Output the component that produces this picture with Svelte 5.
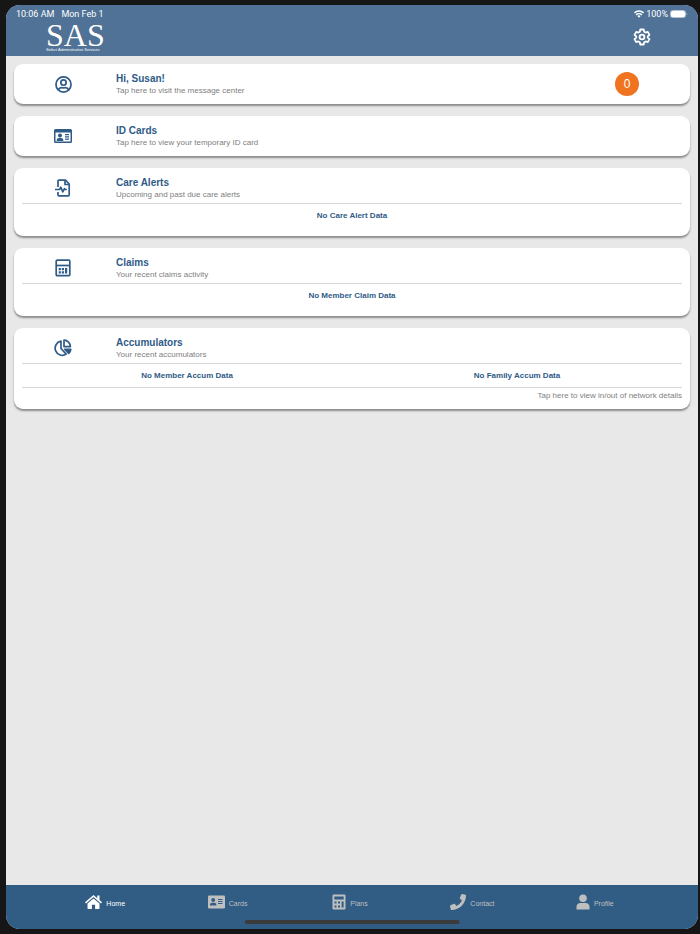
<script lang="ts">
  type Tab = { id: string, label: string };

  const tabs: Tab[] = [
    { id: "home", label: "Home" },
    { id: "cards", label: "Cards" },
    { id: "plans", label: "Plans" },
    { id: "contact", label: "Contact" },
    { id: "profile", label: "Profile" }
  ];

  let activeTab = $state("home");
  let messageCount = $state(0);
</script>

{#snippet cardIcon(name: string)}
  <span class="cardIcon">
    {#if name == "user"}
      <svg width="17" height="17" viewBox="0 0 16 16" fill="none" stroke="currentColor" stroke-width="1.6">
        <circle cx="8" cy="8" r="7.1" />
        <circle cx="8" cy="6.2" r="2.5" />
        <path d="M3 13c.8-1.7 2-2.1 3.2-2.1.7 0 1 .3 1.8.3s1.1-.3 1.8-.3c1.2 0 2.4.4 3.2 2.1" />
      </svg>
    {:else if name == "id"}
      <svg width="18" height="16" viewBox="0 0 18 16">
        <path fill="currentColor" fill-rule="evenodd" d="M1.500 1h15A1.500 1.500 0 0 1 18 2.500v11a1.500 1.500 0 0 1-1.500 1.500h-15A1.500 1.500 0 0 1 0 13.500v-11A1.500 1.500 0 0 1 1.500 1zM1.500 4.600v8.900h15V4.600z" />
        <circle cx="6" cy="7.600" r="2" fill="currentColor" />
        <path fill="currentColor" d="M2.700 13v-.8c0-1.400 1-2.200 2.200-2.200h2.200c1.200 0 2.200.8 2.200 2.200v.8z" />
        <path stroke="currentColor" stroke-width="1.300" d="M11 6.600h4M11 8.900h4M11 11.200h4" />
      </svg>
    {:else if name == "alert"}
      <svg width="18" height="18" viewBox="0 0 18 18" fill="none" stroke="currentColor" stroke-width="1.700" stroke-linejoin="round">
        <path d="M4 8V2.200c0-.6.400-1 1-1h6.500L15.200 5v10.800c0 .6-.4 1-1 1H5c-.6 0-1-.4-1-1V13" />
        <path d="M11 1.500v4h3.800" />
        <path d="M1 10.500h4.500l1.300-2.300 2 4.600 1.700-3.200.6.900h1.700" />
      </svg>
    {:else if name == "claims"}
      <svg width="16" height="18" viewBox="0 0 16 18" fill="none" stroke="currentColor">
        <rect x="1.200" y="1.200" width="13.600" height="15.400" rx="1" stroke-width="1.700" />
        <path stroke-width="1.700" d="M1 6.500h14" />
        <path stroke-width="2.200" d="M3.700 10.100h2.200M6.800 10.100H9M3.700 13.300h2.200M6.800 13.300H9M11.100 9v5.400" />
      </svg>
    {:else}
      <svg width="18" height="18" viewBox="0 0 18 18" fill="none" stroke="currentColor" stroke-width="1.700" stroke-linejoin="round">
        <path d="M7 2.200A7.100 7.100 0 1 0 12.200 15.100L7 9.500z" />
        <path d="M10 1.200A6.600 6.600 0 0 1 16.400 7.600H10z" />
        <path fill="currentColor" d="M10.800 10.400h6c-.2 1.600-.9 2.900-2 4z" />
      </svg>
    {/if}
  </span>
{/snippet}

{#snippet cardHead(icon: string, title: string, text: string)}
  <button class="cardHead">
    {@render cardIcon(icon)}
    <span class="cardText">
      <span class="title">{title}</span>
      <span class="sub">{text}</span>
    </span>
    {#if icon == "user"}
      <span class="count">{messageCount}</span>
    {/if}
  </button>
{/snippet}

<div class="device">
  <div class="screen">
    <header>
      <div class="statusBar">
        <span>10:06 AM</span>
        <span>Mon Feb 1</span>
        <span class="battery">
          <svg width="10" height="8" viewBox="0 0 10 8" fill="none" stroke="#fff" stroke-width="1.500">
            <path d="M.5 2.900a6.500 6.500 0 0 1 9 0M2.200 4.900a4 4 0 0 1 5.600 0" />
            <path fill="#fff" stroke="none" d="M3.400 6a2.300 2.300 0 0 1 3.200 0L5 7.800z" />
          </svg>
          100%
          <svg width="18" height="8" viewBox="0 0 18 8">
            <rect x=".5" y=".5" width="15" height="7" rx="2" fill="none" stroke="#b5c4d4" />
            <rect x="1" y="1" width="14" height="6" rx="1.500" fill="#fff" />
            <path d="M16.500 2.800v2.400c1-.3 1-2.100 0-2.400z" fill="#b5c4d4" />
          </svg>
        </span>
      </div>
      <div class="toolbar">
        <div class="logo">
          <span class="logoName">SAS</span>
          <span class="logoText">Select Administrative Services</span>
        </div>
        <button class="settings" aria-label="Settings">
          <svg width="18" height="18" viewBox="0 0 24 24" fill="none" stroke="#fff" stroke-width="2.400" stroke-linejoin="round">
            <path d="M9.700 2h4.600l.6 3 1.900 1.100 2.900-1 2.300 4-2.300 2v1.800l2.300 2-2.300 4-2.900-1-1.900 1.100-.6 3H9.700l-.6-3-1.900-1.100-2.900 1-2.300-4 2.300-2v-1.800l-2.300-2 2.300-4 2.900 1L9.100 5z" />
            <circle cx="12" cy="12" r="3.200" />
          </svg>
        </button>
      </div>
    </header>

    <main>
      <section class="card">
        {@render cardHead("user", "Hi, Susan!", "Tap here to visit the message center")}
      </section>

      <section class="card">
        {@render cardHead("id", "ID Cards", "Tap here to view your temporary ID card")}
      </section>

      <section class="card">
        {@render cardHead("alert", "Care Alerts", "Upcoming and past due care alerts")}
        <div class="data">
          <p>No Care Alert Data</p>
        </div>
      </section>

      <section class="card">
        {@render cardHead("claims", "Claims", "Your recent claims activity")}
        <div class="data">
          <p>No Member Claim Data</p>
        </div>
      </section>

      <section class="card">
        {@render cardHead("accum", "Accumulators", "Your recent accumulators")}
        <div class="data split">
          <p>No Member Accum Data</p>
          <p>No Family Accum Data</p>
        </div>
        <button class="details">Tap here to view in/out of network details</button>
      </section>
    </main>

    <nav>
      {#each tabs as tab}
        <button class="tab" class:active={activeTab == tab.id} onclick={() => activeTab = tab.id}>
          {#if tab.id == "home"}
            <svg width="17" height="16" viewBox="0 0 17 16" fill="currentColor">
              <path d="M8.500 1 0 8.200l1 1.200 7.500-6.300L16 9.400l1-1.200-2.500-2.100V1.500h-2.200v2.700z" />
              <path d="M8.500 4.500 2.500 9.500v4.700c0 .4.300.7.700.7h3.700v-4.200h3.200v4.200h3.700c.4 0 .7-.3.700-.7V9.500z" />
            </svg>
          {:else if tab.id == "cards"}
            <svg width="17" height="16" viewBox="0 0 17 16">
              <rect y="1.500" width="17" height="13" rx="1.300" fill="currentColor" />
              <g fill="#315d85">
                <circle cx="5.200" cy="6" r="1.900" />
                <path d="M2 11.500v-.7c0-1.300 1-2 2-2h2.400c1 0 2 .7 2 2v.7z" />
                <path d="M10 5h4.500v1H10zM10 7h4.500v1H10zM10 9h4.500v1H10z" />
              </g>
            </svg>
          {:else if tab.id == "plans"}
            <svg width="14" height="16" viewBox="0 0 14 16">
              <rect x=".5" y=".5" width="13" height="15" rx="1.200" fill="currentColor" />
              <path fill="#315d85" d="M2.300 2.500h9.400v3H2.300zM2.500 7.500h2v2h-2zM6 7.500h2v2H6zM9.600 7.500h2v6h-2zM2.500 11.500h2v2h-2zM6 11.500h2v2H6z" />
            </svg>
          {:else if tab.id == "contact"}
            <svg width="16" height="16" viewBox="0 0 512 512" fill="currentColor">
              <path d="M493 25 389 1c-11-3-23 3-28 14l-48 112c-4 10-1 21 7 28l61 50c-36 76-98 139-176 176l-50-61c-7-8-18-11-28-7L15 361c-10 4-16 16-14 27l24 104c3 12 13 20 25 20 256 0 462-207 462-462 0-12-8-22-19-25z" />
            </svg>
          {:else}
            <svg width="14" height="16" viewBox="0 0 14 16" fill="currentColor">
              <circle cx="7" cy="4.300" r="3.800" />
              <path d="M.5 15.500v-2.700C.5 10.600 2.200 9 4.400 9h5.200c2.200 0 3.900 1.600 3.900 3.800v2.700z" />
            </svg>
          {/if}
          <span>{tab.label}</span>
        </button>
      {/each}
    </nav>
    <div class="homeBar"></div>
  </div>
</div>

<style>
:global(body) {
  margin: 0;
  background: #161616;
}

.device {
  box-sizing: border-box;
  display: flex;
  min-height: 100vh;
  padding: 5px 2px 5px 6px;
  font-family: "Liberation Sans", Arial, sans-serif;
}

.screen {
  position: relative;
  display: flex;
  flex: 1;
  flex-direction: column;
  overflow: hidden;
  border-radius: 14px;
  background: #e8e8e8;
}

button {
  margin: 0;
  padding: 0;
  border: none;
  background: none;
  font-family: inherit;
  cursor: pointer;
}

svg {
  display: block;
}

header {
  background: #4f7296;
  color: #fff;
}

.statusBar {
  display: flex;
  gap: 7px;
  padding: 3px 10px 0;
  font-family: Roboto, sans-serif;
  font-size: 9px;
  line-height: 12px;
}

.battery {
  display: flex;
  align-items: center;
  gap: 2px;
  margin-left: auto;
}

.toolbar {
  display: flex;
  justify-content: space-between;
  height: 36px;
  padding: 0 47px 0 40px;
}

.logo {
  display: flex;
  flex-direction: column;
  padding-top: 3px;
}

.logoName {
  font-family: "Liberation Serif", "Times New Roman", serif;
  font-size: 32px;
  line-height: 24px;
}

.logoText {
  font-size: 4px;
  line-height: 6px;
}

.settings {
  align-self: center;
  padding-bottom: 2px;
}

main {
  display: flex;
  flex: 1;
  flex-direction: column;
  gap: 12px;
  padding: 8px;
}

.card {
  padding: 0 8px;
  border-radius: 9px;
  background: #fff;
  box-shadow: 0 2px 2px rgba(0, 0, 0, 0.4);
}

.cardHead {
  display: flex;
  align-items: center;
  width: 100%;
  height: 40px;
  text-align: left;
}

.cardIcon {
  display: flex;
  justify-content: center;
  width: 82px;
  margin-right: 12px;
  color: #2f5b87;
}

.cardText {
  flex: 1;
}

.title {
  display: block;
  color: #2f5b87;
  font-size: 10px;
  font-weight: bold;
  line-height: 12px;
}

.sub {
  display: block;
  color: #808080;
  font-size: 8px;
  line-height: 11px;
}

.count {
  width: 24px;
  height: 24px;
  margin-right: 43px;
  border-radius: 50%;
  background: #f07320;
  color: #fff;
  font-size: 12px;
  line-height: 24px;
  text-align: center;
}

.data {
  margin-top: -5px;
  padding-bottom: 9px;
  border-top: 1px solid #d6d6d6;
}

.data p {
  flex: 1;
  margin: 0;
  color: #2f5b87;
  font-size: 8px;
  font-weight: bold;
  line-height: 23px;
  text-align: center;
}

.split {
  display: flex;
  padding-bottom: 0;
  border-bottom: 1px solid #d6d6d6;
}

.details {
  display: block;
  width: 100%;
  padding-bottom: 5px;
  color: #808080;
  font-size: 8px;
  line-height: 16px;
  text-align: right;
}

nav {
  display: flex;
  height: 44px;
  padding: 0 42px 0 38px;
  background: #315d85;
}

.tab {
  display: flex;
  flex: 1;
  justify-content: center;
  gap: 4px;
  padding-top: 9px;
  color: #bfbfbf;
  font-size: 7px;
  line-height: 20px;
}

.tab.active {
  color: #fff;
}

.homeBar {
  position: absolute;
  bottom: 5px;
  left: 50%;
  width: 31%;
  height: 4px;
  border-radius: 2px;
  background: #3b3b3d;
  transform: translateX(-50%);
}
</style>
